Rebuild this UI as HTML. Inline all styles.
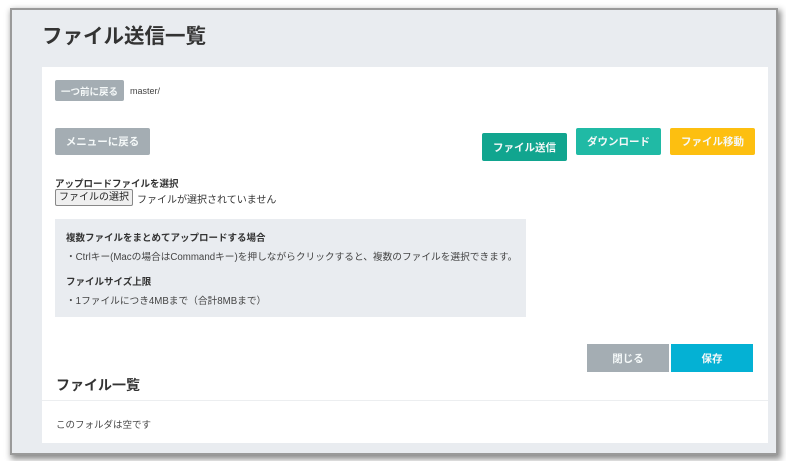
<!DOCTYPE html>
<html><head><meta charset="utf-8"><style>
*{margin:0;padding:0;box-sizing:border-box}
body{width:786px;height:461px;background:#fff;position:relative;overflow:hidden;font-family:"Liberation Sans","Noto Sans CJK JP",sans-serif;color:#333}
.frame{position:absolute;left:12px;top:10px;width:764px;height:443px;background:#e9ecf0;box-shadow:0 0 0 2px #9a9a9a,2px 3px 6px 3px #8a8a8a}
.a{position:absolute;white-space:nowrap}
.card{position:absolute;left:42px;top:67px;width:726px;height:376px;background:#fff}
.btn{position:absolute;color:#f4f8f8;font-size:10.5px;font-weight:bold;display:flex;align-items:center;justify-content:center;border-radius:2px}
</style></head><body>
<div class="frame"></div>
<div class="a" style="left:42px;top:19px;font-size:20.5px;font-weight:bold;color:#333">ファイル送信一覧</div>
<div class="card"></div>
<div class="btn" style="left:55px;top:80px;width:69px;height:21px;background:#a4adb3;font-size:9.5px">一つ前に戻る</div>
<div class="a" style="left:130px;top:86px;font-size:9px;color:#444">master/</div>
<div class="btn" style="left:55px;top:128px;width:95px;height:27px;background:#a4adb3">メニューに戻る</div>
<div class="btn" style="left:482px;top:133px;width:85px;height:28px;background:#11a58f">ファイル送信</div>
<div class="btn" style="left:576px;top:128px;width:85px;height:27px;background:#20baa5">ダウンロード</div>
<div class="btn" style="left:670px;top:128px;width:85px;height:27px;background:#fdbf10">ファイル移動</div>
<div class="a" style="left:55px;top:176px;font-size:9.5px;font-weight:bold;color:#333">アップロードファイルを選択</div>
<div class="a" style="left:55px;top:189px;width:78px;height:17px;border:1px solid #888;background:#efefef;border-radius:2px;font-size:10px;line-height:15px;text-align:center;color:#222">ファイルの選択</div>
<div class="a" style="left:137px;top:191px;font-size:10px;color:#333">ファイルが選択されていません</div>
<div class="a" style="left:55px;top:219px;width:471px;height:98px;background:#e9ecf0"></div>
<div class="a" style="left:66px;top:230px;font-size:9.5px;font-weight:bold">複数ファイルをまとめてアップロードする場合</div>
<div class="a" style="left:66px;top:249px;font-size:9.7px;color:#444">・Ctrlキー(Macの場合はCommandキー)を押しながらクリックすると、複数のファイルを選択できます。</div>
<div class="a" style="left:66px;top:274px;font-size:9.5px;font-weight:bold">ファイルサイズ上限</div>
<div class="a" style="left:66px;top:293px;font-size:9.7px;color:#444">・1ファイルにつき4MBまで（合計8MBまで）</div>
<div class="btn" style="left:587px;top:344px;width:82px;height:28px;background:#a4adb3;border-radius:0">閉じる</div>
<div class="btn" style="left:671px;top:344px;width:82px;height:28px;background:#04b1d4;border-radius:0">保存</div>
<div class="a" style="left:56px;top:375px;font-size:14px;font-weight:bold;color:#333">ファイル一覧</div>
<div class="a" style="left:42px;top:400px;width:726px;height:1px;background:#eceef0"></div>
<div class="a" style="left:56px;top:417px;font-size:9.5px;color:#444">このフォルダは空です</div>
</body></html>
